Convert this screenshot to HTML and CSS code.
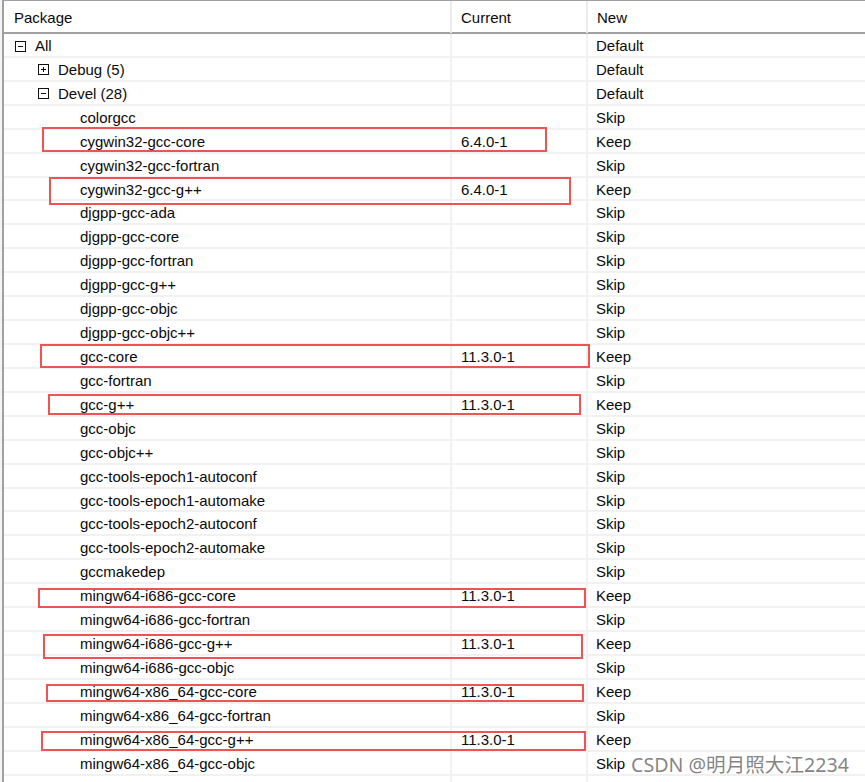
FILE: index.html
```html
<!DOCTYPE html>
<html lang="en">
<head>
  <meta charset="UTF-8" />
  <title>Cygwin Setup - Select Packages</title>
  <link rel="stylesheet" href="styles.css">
</head>
<body>
  <div class="page">
    <div class="tree">
      <div class="head">
        <div class="hcell">Package</div>
        <div class="hcell">Current</div>
        <div class="hcell">New</div>
      </div>

      <div class="rows">
        <div class="row"><div class="cell name lvl0"><svg class="exp" width="11" height="11" viewBox="0 0 11 11"><rect x="0.5" y="0.5" width="10" height="10" fill="#fff" stroke="#111"/><path d="M3 5.5h5" stroke="#111"/></svg>All</div><div class="cell cur"></div><div class="cell new">Default</div></div>
        <div class="row"><div class="cell name lvl1"><svg class="exp" width="11" height="11" viewBox="0 0 11 11"><rect x="0.5" y="0.5" width="10" height="10" fill="#fff" stroke="#111"/><path d="M3 5.5h5M5.5 3v5" stroke="#111"/></svg>Debug (5)</div><div class="cell cur"></div><div class="cell new">Default</div></div>
        <div class="row"><div class="cell name lvl1"><svg class="exp" width="11" height="11" viewBox="0 0 11 11"><rect x="0.5" y="0.5" width="10" height="10" fill="#fff" stroke="#111"/><path d="M3 5.5h5" stroke="#111"/></svg>Devel (28)</div><div class="cell cur"></div><div class="cell new">Default</div></div>
        <div class="row"><div class="cell name lvl2">colorgcc</div><div class="cell cur"></div><div class="cell new">Skip</div></div>
        <div class="row"><div class="cell name lvl2">cygwin32-gcc-core</div><div class="cell cur">6.4.0-1</div><div class="cell new">Keep</div></div>
        <div class="row"><div class="cell name lvl2">cygwin32-gcc-fortran</div><div class="cell cur"></div><div class="cell new">Skip</div></div>
        <div class="row"><div class="cell name lvl2">cygwin32-gcc-g++</div><div class="cell cur">6.4.0-1</div><div class="cell new">Keep</div></div>
        <div class="row"><div class="cell name lvl2">djgpp-gcc-ada</div><div class="cell cur"></div><div class="cell new">Skip</div></div>
        <div class="row"><div class="cell name lvl2">djgpp-gcc-core</div><div class="cell cur"></div><div class="cell new">Skip</div></div>
        <div class="row"><div class="cell name lvl2">djgpp-gcc-fortran</div><div class="cell cur"></div><div class="cell new">Skip</div></div>
        <div class="row"><div class="cell name lvl2">djgpp-gcc-g++</div><div class="cell cur"></div><div class="cell new">Skip</div></div>
        <div class="row"><div class="cell name lvl2">djgpp-gcc-objc</div><div class="cell cur"></div><div class="cell new">Skip</div></div>
        <div class="row"><div class="cell name lvl2">djgpp-gcc-objc++</div><div class="cell cur"></div><div class="cell new">Skip</div></div>
        <div class="row"><div class="cell name lvl2">gcc-core</div><div class="cell cur">11.3.0-1</div><div class="cell new">Keep</div></div>
        <div class="row"><div class="cell name lvl2">gcc-fortran</div><div class="cell cur"></div><div class="cell new">Skip</div></div>
        <div class="row"><div class="cell name lvl2">gcc-g++</div><div class="cell cur">11.3.0-1</div><div class="cell new">Keep</div></div>
        <div class="row"><div class="cell name lvl2">gcc-objc</div><div class="cell cur"></div><div class="cell new">Skip</div></div>
        <div class="row"><div class="cell name lvl2">gcc-objc++</div><div class="cell cur"></div><div class="cell new">Skip</div></div>
        <div class="row"><div class="cell name lvl2">gcc-tools-epoch1-autoconf</div><div class="cell cur"></div><div class="cell new">Skip</div></div>
        <div class="row"><div class="cell name lvl2">gcc-tools-epoch1-automake</div><div class="cell cur"></div><div class="cell new">Skip</div></div>
        <div class="row"><div class="cell name lvl2">gcc-tools-epoch2-autoconf</div><div class="cell cur"></div><div class="cell new">Skip</div></div>
        <div class="row"><div class="cell name lvl2">gcc-tools-epoch2-automake</div><div class="cell cur"></div><div class="cell new">Skip</div></div>
        <div class="row"><div class="cell name lvl2">gccmakedep</div><div class="cell cur"></div><div class="cell new">Skip</div></div>
        <div class="row"><div class="cell name lvl2">mingw64-i686-gcc-core</div><div class="cell cur">11.3.0-1</div><div class="cell new">Keep</div></div>
        <div class="row"><div class="cell name lvl2">mingw64-i686-gcc-fortran</div><div class="cell cur"></div><div class="cell new">Skip</div></div>
        <div class="row"><div class="cell name lvl2">mingw64-i686-gcc-g++</div><div class="cell cur">11.3.0-1</div><div class="cell new">Keep</div></div>
        <div class="row"><div class="cell name lvl2">mingw64-i686-gcc-objc</div><div class="cell cur"></div><div class="cell new">Skip</div></div>
        <div class="row"><div class="cell name lvl2">mingw64-x86_64-gcc-core</div><div class="cell cur">11.3.0-1</div><div class="cell new">Keep</div></div>
        <div class="row"><div class="cell name lvl2">mingw64-x86_64-gcc-fortran</div><div class="cell cur"></div><div class="cell new">Skip</div></div>
        <div class="row"><div class="cell name lvl2">mingw64-x86_64-gcc-g++</div><div class="cell cur">11.3.0-1</div><div class="cell new">Keep</div></div>
        <div class="row"><div class="cell name lvl2">mingw64-x86_64-gcc-objc</div><div class="cell cur"></div><div class="cell new">Skip</div></div>
        <div class="row"><div class="cell name lvl1"><svg class="exp" width="11" height="11" viewBox="0 0 11 11"><rect x="0.5" y="0.5" width="10" height="10" fill="#fff" stroke="#111"/><path d="M3 5.5h5M5.5 3v5" stroke="#111"/></svg>Libs (2)</div><div class="cell cur"></div><div class="cell new">Default</div></div>
      </div>
    </div>

    <!-- red highlight boxes drawn over the list -->
    <div class="mark" style="left:42px; top:127px; width:505px; height:25px;"></div>
    <div class="mark" style="left:49px; top:177px; width:522px; height:28px;"></div>
    <div class="mark" style="left:40px; top:344px; width:550px; height:24px;"></div>
    <div class="mark" style="left:48px; top:394px; width:533px; height:21px;"></div>
    <div class="mark" style="left:38px; top:588px; width:548px; height:20px;"></div>
    <div class="mark" style="left:43px; top:634px; width:540px; height:25px;"></div>
    <div class="mark" style="left:46px; top:684px; width:538px; height:18px;"></div>
    <div class="mark" style="left:41px; top:731px; width:545px; height:20px;"></div>

    <div class="watermark">CSDN @明月照大江2234</div>
  </div>
</body>
</html>
```

FILE: styles.css
```css
* {
  box-sizing: border-box;
}

body {
  margin: 0;
  background: #fff;
  font-family: 'Liberation Sans', Arial, sans-serif;
  font-size: 15px;
  color: #0a0a0a;
}

.page {
  position: relative;
  width: 865px;
  height: 782px;
  overflow: hidden;
  background: #f4f4f4;
  padding-left: 2px;
}

.tree {
  height: 100%;
  background: #fff;
  border-left: 2px solid #a0a0a0;
}

.head {
  display: grid;
  grid-template-columns: 448px 136px 1fr;
  height: 34px;
  border-top: 1px solid #a0a0a0;
  border-bottom: 2px solid #a0a0a0;
}

.hcell {
  line-height: 31px;
  padding-top: 1px;
  padding-left: 9px;
  border-right: 2px solid #ececec;
}

.hcell:first-child {
  padding-left: 10px;
}

.hcell:last-child {
  border-right: none;
}

.row {
  display: grid;
  grid-template-columns: 448px 136px 1fr;
  height: 23.93px;
  border-bottom: 2px solid #f1f1f1;
}

.cell {
  line-height: 22px;
  padding-top: 1px;
  white-space: nowrap;
  border-right: 2px solid #f1f1f1;
}

.cell.new {
  border-right: none;
  padding-left: 8px;
}

.cell.cur {
  padding-left: 9px;
}

.name {
  display: flex;
  align-items: center;
}

.lvl0 {
  padding-left: 11px;
}

.lvl1 {
  padding-left: 34px;
}

.lvl2 {
  padding-left: 76px;
}

.exp {
  flex: none;
  margin-right: 9px;
}

.mark {
  position: absolute;
  border: 2px solid #ef5353;
}

.watermark {
  position: absolute;
  left: 631px;
  top: 751px;
  font-family: 'Noto Sans', 'Noto Sans CJK SC', sans-serif;
  font-size: 19.6px;
  line-height: 28px;
  color: rgba(110, 110, 110, 0.85);
  white-space: nowrap;
}
```
